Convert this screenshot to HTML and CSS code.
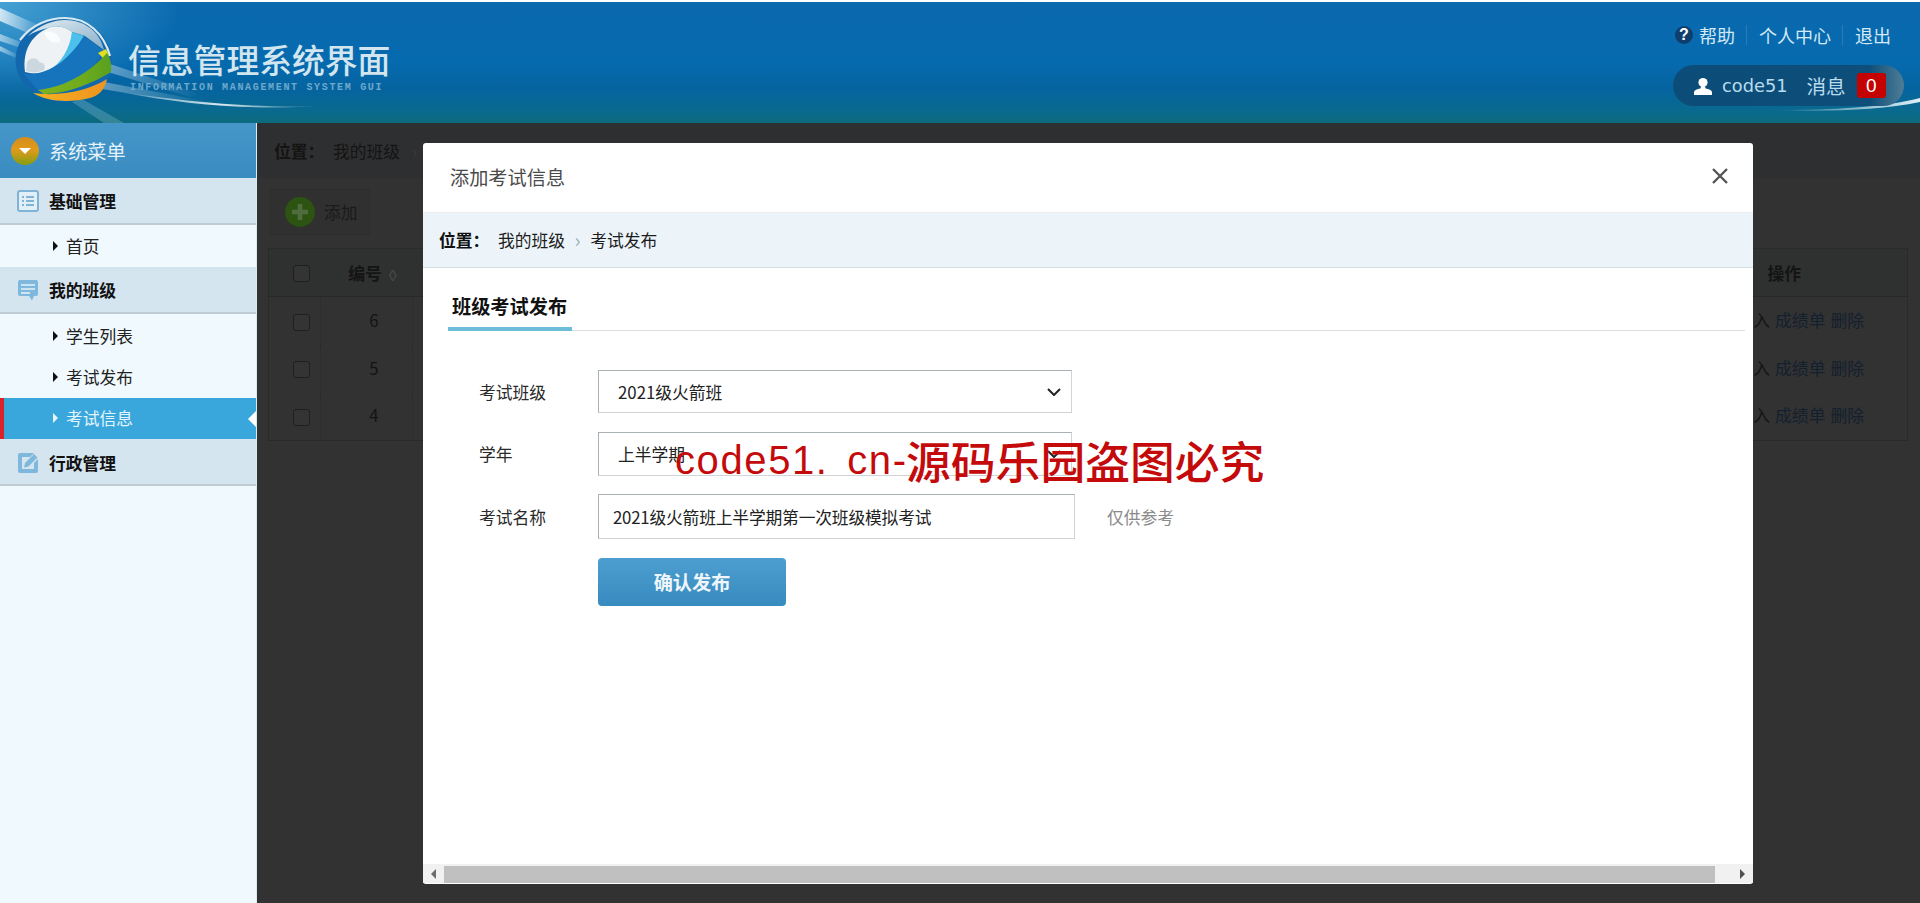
FILE: index.html
```html
<!DOCTYPE html>
<html lang="zh-CN">
<head>
<meta charset="utf-8">
<title>信息管理系统界面</title>
<link rel="stylesheet" href="styles.css">
</head>
<body>
<header class="topbar">
  <svg class="streaks" viewBox="0 0 1920 121" preserveAspectRatio="none" aria-hidden="true">
    <defs>
      <linearGradient id="sw" x1="0" x2="1" y1="0" y2="0">
        <stop offset="0" stop-color="#fff" stop-opacity=".15"/>
        <stop offset=".5" stop-color="#fff" stop-opacity=".85"/>
        <stop offset="1" stop-color="#fff" stop-opacity="0"/>
      </linearGradient>
      <linearGradient id="sr" x1="0" x2="1" y1="0" y2="0">
        <stop offset="0" stop-color="#fff" stop-opacity="0"/>
        <stop offset="1" stop-color="#e8f6fb" stop-opacity=".95"/>
      </linearGradient>
      <linearGradient id="tl" x1="0" x2="1" y1="0" y2="0">
        <stop offset="0" stop-color="#fff" stop-opacity=".75"/>
        <stop offset="1" stop-color="#fff" stop-opacity=".1"/>
      </linearGradient>
      <linearGradient id="beam" x1="0" x2="1" y1="0" y2="0">
        <stop offset="0" stop-color="#fff" stop-opacity=".35"/>
        <stop offset="1" stop-color="#fff" stop-opacity="0"/>
      </linearGradient>
      <radialGradient id="glow" cx="0" cy="0" r="1">
        <stop offset="0" stop-color="#5ab4e0" stop-opacity=".75"/>
        <stop offset="1" stop-color="#5ab4e0" stop-opacity="0"/>
      </radialGradient>
    </defs>
    <rect width="180" height="100" fill="url(#glow)"/>
    <path d="M0 6L36 22L30 32L0 19Z" fill="url(#tl)"/>
    <path d="M0 32L26 42L24 47L0 39Z" fill="url(#tl)" opacity=".7"/>
    <path d="M0 44L18 53L16 56L0 49Z" fill="url(#tl)" opacity=".7"/>
    <path d="M110 62L200 92L190 95L108 70Z" fill="url(#beam)"/>
    <path d="M104 80L210 100L200 103L102 87Z" fill="url(#beam)"/>
    <path d="M82 97L124 121L104 121L72 100Z" fill="#cde8f3" opacity=".22"/>
    <path d="M120 90C190 100 250 106 320 104C260 108 190 104 120 90Z" fill="url(#sw)"/>
    <path d="M1770 108C1830 108 1880 106 1920 96V100C1880 108 1830 110 1770 108Z" fill="url(#sr)"/>
  </svg>
  <div class="brand">
    <svg class="logo" viewBox="0 0 120 110" aria-hidden="true">
      <defs>
        <linearGradient id="gr" x1="0" x2="1" y1="0" y2="0">
          <stop offset="0" stop-color="#7fb31f"/>
          <stop offset=".6" stop-color="#6fab1c"/>
          <stop offset="1" stop-color="#58a020"/>
        </linearGradient>
        <linearGradient id="rimfill" x1="0" x2="1" y1="0" y2="1">
          <stop offset="0" stop-color="#e4eef3"/>
          <stop offset="1" stop-color="#86aec8"/>
        </linearGradient>
        <linearGradient id="org" x1="0" x2="1" y1="0" y2="0">
          <stop offset="0" stop-color="#f6b21f"/>
          <stop offset="1" stop-color="#ee9320"/>
        </linearGradient>
      </defs>
      <ellipse cx="63.500" cy="60" rx="48" ry="42" fill="#1368ad"/>
      <path d="M28 36C40 24 55 20 65 20C85 20 100 32 104 50L85 36L72 32C66 28 58 24 48 28C40 30 34 32 28 36Z" fill="url(#rimfill)"/>
      <path d="M25 72C22 50 32 35 48 28C58 24 66 28 72 32C72 48 62 64 48 71C40 74 32 74 25 72Z" fill="#eef2f4"/>
      <path d="M27 62C32 56 38 58 40 63C44 62 46 66 44 70C38 73 31 73 26 71Z" fill="#ccd8df"/>
      <path d="M44 32C52 30 60 34 60 42C52 44 46 40 44 32Z" fill="#fbfcfd"/>
      <path d="M72 32L84 36C76 50 66 64 48 72C62 62 70 48 72 32Z" fill="#4cc0ec"/>
      <path d="M84 36L103 50C96 70 70 88 38 90L24 74C50 76 70 58 84 36Z" fill="#1674bd"/>
      <path d="M20 40C32 24 50 18 65 18C88 18 104 34 110 56" fill="none" stroke="#d6e9f2" stroke-width="2.200"/>
      <path d="M98 53L106 49L109 56L104 59Z" fill="#dfe022"/>
      <path d="M38 90C66 87 90 72 107 53C111 60 112 66 111 72C95 82 68 94 44 94Z" fill="url(#gr)"/>
      <path d="M33 93C60 97 90 90 107 79C105 90 98 96 90 98C70 103 48 102 33 93Z" fill="url(#org)"/>
    </svg>
    <div class="brand-text">
      <div class="brand-title">信息管理系统界面</div>
      <div class="brand-sub">INFORMATION MANAGEMENT SYSTEM GUI</div>
    </div>
  </div>
  <div class="top-right">
    <nav class="top-links">
      <span class="help-icon">?</span>
      <a class="top-link help-link">帮助</a>
      <a class="top-link">个人中心</a>
      <a class="top-link">退出</a>
    </nav>
    <div class="user-pill">
      <svg class="user-icon" viewBox="0 0 18 18" aria-hidden="true">
        <circle cx="9" cy="5.500" r="4.600" fill="#fff"/>
        <path d="M7 9.500L11 9.500L11.600 11.600C15 12.300 17.600 13.400 18 15V18H0V15C.4 13.400 3 12.300 6.400 11.600Z" fill="#fff"/>
      </svg>
      <span class="user-name">code51</span>
      <span class="user-msg">消息</span>
      <span class="badge">0</span>
    </div>
  </div>
</header>

<div class="body-row">
  <aside class="sidebar">
    <div class="menu-title">
      <span class="menu-dot"></span>
      <span>系统菜单</span>
    </div>
    <div class="group-head">
      <svg class="group-icon" viewBox="0 0 22 22" aria-hidden="true">
        <rect x="1" y="1" width="20" height="20" rx="2" fill="#e3eff6" stroke="#80b4d6" stroke-width="2"/>
        <path d="M5 7h2M9 7h8M5 11h2M9 11h8M5 15h2M9 15h8" stroke="#80b4d6" stroke-width="2"/>
      </svg>
      <span>基础管理</span>
    </div>
    <a class="menu-item"><i class="tri"></i>首页</a>
    <div class="group-head">
      <svg class="group-icon" viewBox="0 0 22 22" aria-hidden="true">
        <path d="M3 1H19A2 2 0 0 1 21 3V15A2 2 0 0 1 19 17H17L15 21.500L12 17H3A2 2 0 0 1 1 15V3A2 2 0 0 1 3 1Z" fill="#7fb8dd"/>
        <path d="M4 6H18M4 10H18" stroke="#e6f2f8" stroke-width="1.600"/>
        <path d="M4 14H13" stroke="#e6f2f8" stroke-width="1.600"/>
      </svg>
      <span>我的班级</span>
    </div>
    <a class="menu-item item-low"><i class="tri"></i>学生列表</a>
    <a class="menu-item"><i class="tri"></i>考试发布</a>
    <a class="menu-item is-active"><i class="tri"></i>考试信息</a>
    <div class="group-head">
      <svg class="group-icon" viewBox="0 0 22 22" aria-hidden="true">
        <path d="M17 1H3A2 2 0 0 0 1 3V19A2 2 0 0 0 3 21H19A2 2 0 0 0 21 19V7L17 11V17H5V5H13Z" fill="#7fb8dd"/>
        <path d="M8 11L17 2L20.500 5.500L11.500 14.500L7 15.500Z" fill="#7fb8dd"/>
      </svg>
      <span>行政管理</span>
    </div>
  </aside>

  <main class="content">
    <div class="crumb-bar">
      <b class="crumb-label">位置：</b>
      <span>我的班级</span>
      <span class="crumb-sep">›</span>
    </div>
    <div class="tools">
      <span class="add-btn">
        <svg class="add-icon" viewBox="0 0 30 30" aria-hidden="true">
          <circle cx="15" cy="15" r="15" fill="#2c5410"/>
          <path d="M15 7V23M7 15H23" stroke="#506b3e" stroke-width="4.500"/>
        </svg>
        添加
      </span>
    </div>
    <table class="grid">
      <thead>
        <tr>
          <th class="c-check"><span class="check"></span></th>
          <th class="c-id">编号<i class="sort">◊</i></th>
          <th></th>
          <th class="c-ops">操作</th>
        </tr>
      </thead>
      <tbody>
        <tr>
          <td class="c-check"><span class="check"></span></td><td class="c-id">6</td><td></td>
          <td class="c-ops-cell">导入<a>成绩单</a><a>删除</a></td>
        </tr>
        <tr>
          <td class="c-check"><span class="check"></span></td><td class="c-id">5</td><td></td>
          <td class="c-ops-cell">导入<a>成绩单</a><a>删除</a></td>
        </tr>
        <tr>
          <td class="c-check"><span class="check"></span></td><td class="c-id">4</td><td></td>
          <td class="c-ops-cell">导入<a>成绩单</a><a>删除</a></td>
        </tr>
      </tbody>
    </table>

    <section class="modal">
      <div class="modal-head">
        <span class="modal-title">添加考试信息</span>
        <svg class="modal-close" viewBox="0 0 16 16" aria-hidden="true">
          <path d="M1 1L15 15M15 1L1 15" stroke="#555" stroke-width="2.400"/>
        </svg>
      </div>
      <div class="modal-crumb">
        <b class="modal-crumb-label">位置：</b>
        <span>我的班级</span>
        <span class="modal-crumb-sep">›</span>
        <span>考试发布</span>
      </div>
      <div class="modal-body">
        <div class="tabs"><span class="tab">班级考试发布</span></div>
        <form class="form">
          <div class="form-row row-select">
            <label class="form-label">考试班级</label>
            <select class="field field-select"><option>2021级火箭班</option></select>
          </div>
          <div class="form-row row-select">
            <label class="form-label">学年</label>
            <select class="field field-select"><option>上半学期</option></select>
          </div>
          <div class="form-row row-input">
            <label class="form-label">考试名称</label>
            <input class="field field-input" value="2021级火箭班上半学期第一次班级模拟考试">
            <span class="hint">仅供参考</span>
          </div>
          <div class="form-row row-action">
            <span class="form-label"></span>
            <button class="submit" type="button">确认发布</button>
          </div>
        </form>
      </div>
      <div class="hscroll">
        <span class="hs-btn hs-left"><i class="hs-tri-l"></i></span>
        <span class="hs-thumb"></span>
        <span class="hs-btn hs-right"><i class="hs-tri-r"></i></span>
      </div>
    </section>
  </main>
</div>

<div class="watermark"><span class="wm-latin">code51. cn-</span><span class="wm-cjk">源码乐园盗图必究</span></div>
</body>
</html>
```

FILE: styles.css
```css
* { box-sizing: border-box; }
html, body { height: 100%; }
body {
  margin: 0;
  overflow: hidden;
  font-family: "Noto Sans CJK SC", "Liberation Sans", sans-serif;
  font-size: 16.8px;
  color: #222;
  background: #fff;
  display: flex;
  flex-direction: column;
}
a { color: inherit; text-decoration: none; }
i { font-style: normal; }

/* top bar */
.topbar {
  position: relative;
  flex: 0 0 121px;
  margin-top: 2px;
  display: flex;
  justify-content: space-between;
  background: linear-gradient(#0b69ae 0, #066aaf 50%, #05649f 72%, #0a6a8c 92%, #0c6a7c 100%);
  overflow: hidden;
}
.streaks { position: absolute; inset: 0; width: 100%; height: 100%; }
.brand { position: relative; display: flex; align-items: flex-start; }
.logo { width: 120px; height: 110px; margin-top: -2px; flex: none; }
.brand-text { margin: 35px 0 0 8px; }
.brand-title {
  font-size: 32.800px;
  font-weight: 500;
  line-height: 44px;
  color: #d3e6ef;
  white-space: nowrap;
}
.brand-sub {
  font-family: "Liberation Mono", monospace;
  font-size: 10px;
  font-weight: 700;
  line-height: 12px;
  letter-spacing: 1.670px;
  color: #6fa9cb;
  margin-left: 2px;
  margin-top: 1px;
  white-space: nowrap;
}
.top-right {
  position: relative;
  width: 231px;
  margin-right: 16px;
  display: flex;
  flex-direction: column;
  align-items: flex-start;
}
.top-links {
  display: flex;
  align-items: center;
  height: 24px;
  margin-top: 21px;
  margin-left: 2px;
  font-size: 18px;
  white-space: nowrap;
}
.help-icon {
  width: 18px;
  height: 18px;
  margin-right: 6px;
  border-radius: 50%;
  background: #0f3e6d;
  color: #fff;
  font: bold 16px/18px "Liberation Sans", sans-serif;
  text-align: center;
}
.top-link { color: #d2e9f6; padding-right: 11px; margin-right: 12px; border-right: 1px solid #2a7bb0; line-height: 20px; }
.top-link:last-child { border-right: 0; padding-right: 0; margin-right: 0; }
.user-pill {
  width: 231px;
  height: 41px;
  margin-top: 18px;
  padding-left: 21px;
  display: flex;
  align-items: center;
  border-radius: 21px;
  background: linear-gradient(90deg, #0b4d78 0, #0d4f7a 85%, #4f7d96 100%);
  color: #b9dcee;
}
.user-icon { width: 18px; height: 18px; flex: none; }
.user-name { font-family: "DejaVu Sans", sans-serif; font-size: 17.800px; margin-left: 10px; }
.user-msg { font-size: 19.600px; margin-left: 19px; }
.badge {
  width: 29px;
  height: 25px;
  margin-left: 11px;
  border-radius: 3px;
  background: #c40202;
  color: #fff;
  font: 19px/25px "Liberation Sans", sans-serif;
  text-align: center;
}

/* layout */
.body-row { flex: 1; display: flex; min-height: 0; }

/* sidebar */
.sidebar {
  flex: 0 0 257px;
  background: #f0f9fd;
  border-right: 1px solid #dceaf3;
}
.menu-title {
  height: 55px;
  display: flex;
  align-items: center;
  gap: 10px;
  padding-left: 11px;
  font-size: 19.200px;
  color: #e4f3fb;
  background: linear-gradient(#4596c9, #3a8bc0);
}
.menu-dot {
  position: relative;
  width: 28px;
  height: 28px;
  border-radius: 50%;
  background: linear-gradient(#d48d1c, #e09a1a 45%, #859e12);
}
.menu-dot::after {
  content: "";
  position: absolute;
  left: 8px;
  top: 11px;
  border: 6px solid transparent;
  border-top: 6px solid #fff;
  border-bottom: 0;
}
.group-head {
  height: 47px;
  display: flex;
  align-items: center;
  gap: 10px;
  padding-left: 17px;
  font-weight: 700;
  color: #111;
  background: #d5e5ef;
  border-bottom: 2px solid #bfccd4;
}
.group-head:last-child { padding-top: 2px; }
.group-icon { width: 22px; height: 22px; flex: none; }
.menu-item {
  position: relative;
  display: flex;
  align-items: center;
  height: 42px;
  padding-left: 53px;
  color: #222;
}
.item-low { padding-top: 2px; }
.tri {
  width: 0;
  height: 0;
  margin-right: 8px;
  border: 5px solid transparent;
  border-left: 5px solid #111;
  border-right: 0;
}
.is-active {
  height: 41px;
  padding-bottom: 2px;
  background: #3aa7dc;
  color: #e4f4fc;
  border-left: 4px solid #d9232a;
  padding-left: 49px;
}
.is-active .tri { border-left-color: #e6f5fc; }
.is-active::after {
  content: "";
  position: absolute;
  right: 0;
  top: 50%;
  margin-top: -8px;
  border: 8px solid transparent;
  border-right: 8px solid #fff;
  border-left: 0;
}

/* dimmed page behind the dialog */
.content {
  position: relative;
  flex: 1;
  min-width: 0;
  background: #323232;
  color: #141414;
}
.crumb-bar {
  height: 55px;
  display: flex;
  align-items: center;
  padding-left: 17px;
  background: #2e2f30;
}
.crumb-label { width: 59px; }
.crumb-sep { margin-left: 12px; color: #3c3c3c; }
.tools { height: 70px; padding: 11px 0 0 13px; }
.add-btn {
  display: inline-flex;
  align-items: center;
  width: 100px;
  height: 46px;
  padding-left: 14px;
  gap: 9px;
  border-radius: 3px;
  border: 1px solid #2e2e2e;
  background: #303030;
  color: #1a1a1a;
}
.add-icon { width: 30px; height: 30px; flex: none; }
.grid {
  width: 1640px;
  margin-left: 11px;
  table-layout: fixed;
  border-collapse: collapse;
  border: 1px solid #2a2a2a;
}
.grid th {
  height: 48px;
  background: #2f3030;
  border-bottom: 1px solid #282828;
  font-weight: 700;
  font-size: 16.800px;
  padding: 0;
}
.grid td {
  height: 48px;
  padding: 0 0 2px;
  border-right: 1px dotted #292929;
}
.grid td:nth-child(3), .grid td:last-child { border-right: 0; }
.c-check { width: 52px; text-align: center; }
.grid .c-check { padding-left: 14px; }
.c-id { width: 92px; text-align: center; color: #141414; }
.grid .c-id { padding-left: 15px; }
.grid th .check { margin-top: -2px; }
.grid th.c-ops { width: 200px; text-align: left; padding-left: 60px; }
.grid .c-ops-cell { text-align: right; padding-right: 43px; white-space: nowrap; }
.c-ops-cell a { margin-left: 5px; color: #14202e; }
.check {
  display: inline-block;
  width: 17px;
  height: 17px;
  vertical-align: middle;
  border: 1.500px solid #1f1f1f;
  border-radius: 3px;
  background: #343434;
}
.sort { margin-left: 4px; color: #4a4a4a; font-weight: 400; font-size: 14px; }

/* dialog */
.modal {
  position: absolute;
  left: 166px;
  top: 20px;
  width: 1330px;
  height: 741px;
  display: flex;
  flex-direction: column;
  background: #fff;
  border-radius: 3px;
  color: #222;
  overflow: hidden;
}
.modal-head {
  flex: none;
  height: 70px;
  display: flex;
  align-items: center;
  justify-content: space-between;
  padding: 0 25px 2px 27px;
  border-bottom: 1px solid #eee;
}
.modal-title { font-size: 19.200px; color: #4a4a4a; }
.modal-close { width: 16px; height: 16px; margin-top: -2px; }
.modal-crumb {
  flex: none;
  height: 55px;
  display: flex;
  align-items: center;
  padding-left: 16px;
  background: #ecf4fa;
  border-bottom: 1px solid #d5dfe6;
  color: #1c1c1c;
}
.modal-crumb-label { width: 59px; color: #111; }
.modal-crumb-sep { width: 25px; text-align: center; color: #9bb0b5; font-size: 20px; line-height: 20px; }
.modal-body { flex: 1; padding: 0 8px 0 25px; min-height: 0; }
.tabs {
  height: 63px;
  display: flex;
  align-items: flex-end;
  border-bottom: 1px solid #dcdfe1;
}
.tab {
  width: 124px;
  height: 45px;
  margin-bottom: -1px;
  padding-left: 4px;
  font-size: 19.200px;
  font-weight: 700;
  line-height: 41px;
  color: #111;
  border-bottom: 4px solid #6dbdd9;
  white-space: nowrap;
}
.form { padding: 39px 0 0 31px; }
.form-row { display: flex; align-items: center; margin-bottom: 19px; }
.form-row.row-select + .row-select { margin-bottom: 18px; }
.form-label { width: 119px; flex: none; color: #2a2a2a; }
.field {
  font-family: inherit;
  font-size: 16.800px;
  color: #222;
  background: #fff;
  border: 1px solid #d0d4d6;
  border-top-color: #a9b1b5;
  border-left-color: #a9b1b5;
  border-radius: 0;
  outline: 0;
}
.field-select {
  width: 474px;
  height: 43px;
  padding-left: 19px;
  appearance: none;
  background-image: url("data:image/svg+xml,%3Csvg xmlns='http://www.w3.org/2000/svg' width='14' height='8'%3E%3Cpath d='M1 1L7 7L13 1' fill='none' stroke='%23222' stroke-width='2'/%3E%3C/svg%3E");
  background-repeat: no-repeat;
  background-position: right 10px center;
}
.row-select + .row-select .field-select { height: 44px; }
.field-input { width: 477px; height: 45px; padding-left: 14px; letter-spacing: -.2px; }
.hint { margin-left: 32px; color: #8a8a8a; }
.submit {
  width: 188px;
  height: 48px;
  border: 0;
  border-radius: 4px;
  font-family: inherit;
  font-size: 19.200px;
  font-weight: 700;
  color: #eef6fb;
  background: linear-gradient(#4d9ed0, #388bbf);
}
.hscroll {
  flex: none;
  height: 19px;
  margin-bottom: 1px;
  display: flex;
  background: #f1f1f1;
}
.hs-btn { display: flex; align-items: center; background: #f1f1f1; }
.hs-left { width: 21px; justify-content: center; }
.hs-right { width: 38px; justify-content: flex-end; padding-right: 8px; }
.hs-thumb { flex: 1; margin-top: 2px; background: #c0c0c0; }
.hs-tri-l { border: 5px solid transparent; border-right: 5px solid #6d6d6d; border-left: 0; }
.hs-tri-r { border: 5px solid transparent; border-left: 5px solid #505050; border-right: 0; }

/* watermark */
.watermark {
  position: absolute;
  left: 675px;
  top: 432px;
  display: flex;
  align-items: center;
  color: #c40a0a;
  white-space: nowrap;
  line-height: 56px;
  pointer-events: none;
}
.wm-latin { width: 231px; font-family: "Liberation Sans", sans-serif; font-size: 40px; letter-spacing: 1.600px; word-spacing: 6px; }
.wm-cjk { font-size: 44.800px; font-weight: 500; }
```
